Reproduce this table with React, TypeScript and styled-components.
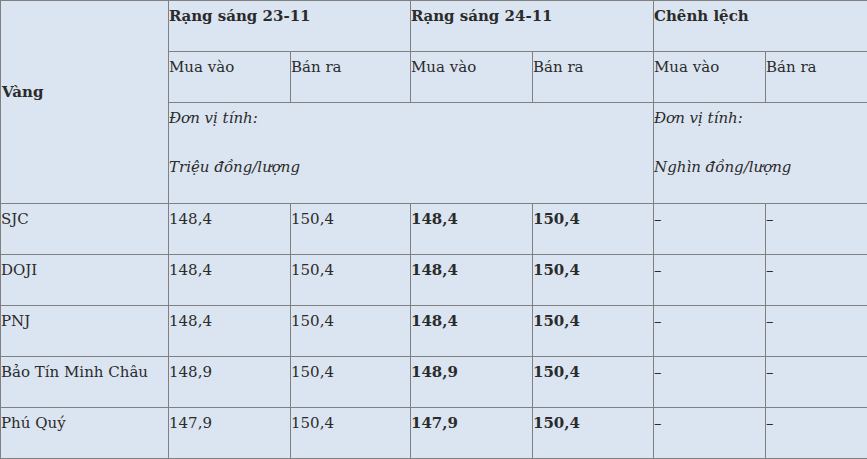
import React from 'react';
import styled, { createGlobalStyle } from 'styled-components';

const GlobalStyle = createGlobalStyle`
  html, body {
    margin: 0;
    padding: 0;
    background: #ffffff;
  }
`;

const Table = styled.div`
  display: grid;
  grid-template-columns: 168px 122px 120px 122px 121px 112px 102px;
  grid-template-rows: 51px 51px 101px repeat(5, 51px);
  width: 868px;
  border-top: 1px solid #808080;
  border-left: 1px solid #808080;
  background: #dbe5f1;
  font-family: "DejaVu Serif", "Liberation Serif", serif;
  font-size: 15px;
  line-height: 26px;
  color: #2b2b2b;
`;

const Cell = styled.div<{ $bold?: boolean; $italic?: boolean; $span?: number; $rows?: number }>`
  box-sizing: border-box;
  border-right: 1px solid #808080;
  border-bottom: 1px solid #808080;
  padding: 2px 0 0 0;
  overflow: hidden;
  white-space: nowrap;
  font-weight: ${(p) => (p.$bold ? 700 : 400)};
  font-style: ${(p) => (p.$italic ? 'italic' : 'normal')};
  grid-column: span ${(p) => p.$span ?? 1};
  grid-row: span ${(p) => p.$rows ?? 1};
`;

const CornerCell = styled(Cell)`
  display: flex;
  align-items: center;
  padding: 0 0 20px 1px;
`;

const UnitLine = styled.div`
  & + & {
    margin-top: 23px;
  }
`;

type Row = { name: string; buy1: string; sell1: string; buy2: string; sell2: string };

const rows: Row[] = [
  { name: 'SJC', buy1: '148,4', sell1: '150,4', buy2: '148,4', sell2: '150,4' },
  { name: 'DOJI', buy1: '148,4', sell1: '150,4', buy2: '148,4', sell2: '150,4' },
  { name: 'PNJ', buy1: '148,4', sell1: '150,4', buy2: '148,4', sell2: '150,4' },
  { name: 'Bảo Tín Minh Châu', buy1: '148,9', sell1: '150,4', buy2: '148,9', sell2: '150,4' },
  { name: 'Phú Quý', buy1: '147,9', sell1: '150,4', buy2: '147,9', sell2: '150,4' },
];

export default function App() {
  return (
    <>
      <GlobalStyle />
      <Table>
        <CornerCell $bold $rows={3}>Vàng</CornerCell>
        <Cell $bold $span={2}>Rạng sáng 23-11</Cell>
        <Cell $bold $span={2}>Rạng sáng 24-11</Cell>
        <Cell $bold $span={2}>Chênh lệch</Cell>

        <Cell>Mua vào</Cell>
        <Cell>Bán ra</Cell>
        <Cell>Mua vào</Cell>
        <Cell>Bán ra</Cell>
        <Cell>Mua vào</Cell>
        <Cell>Bán ra</Cell>

        <Cell $italic $span={4}>
          <UnitLine>Đơn vị tính:</UnitLine>
          <UnitLine>Triệu đồng/lượng</UnitLine>
        </Cell>
        <Cell $italic $span={2}>
          <UnitLine>Đơn vị tính:</UnitLine>
          <UnitLine>Nghìn đồng/lượng</UnitLine>
        </Cell>

        {rows.map((r) => (
          <React.Fragment key={r.name}>
            <Cell>{r.name}</Cell>
            <Cell>{r.buy1}</Cell>
            <Cell>{r.sell1}</Cell>
            <Cell $bold>{r.buy2}</Cell>
            <Cell $bold>{r.sell2}</Cell>
            <Cell>–</Cell>
            <Cell>–</Cell>
          </React.Fragment>
        ))}
      </Table>
    </>
  );
}
